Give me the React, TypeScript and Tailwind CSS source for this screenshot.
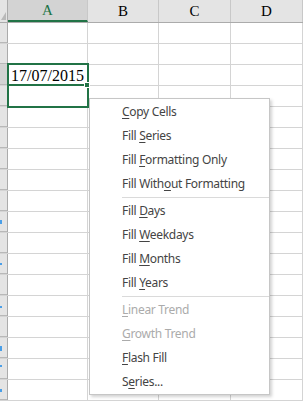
const COLUMNS = [
  { key: 'A', width: 'w-[80px]', active: true },
  { key: 'B', width: 'w-[71px]', active: false },
  { key: 'C', width: 'w-[72px]', active: false },
  { key: 'D', width: 'flex-1', active: false },
];

// clipped row numbers peeking out at the very left edge
const ROW_MARKS: Record<number, string> = {
  9: 'h-[4px] mt-[8px]',
  11: 'h-[2px] mt-[9px]',
  13: 'h-[2px] mt-[10px]',
  15: 'h-[5px] mt-[8px]',
  16: 'h-[2px] mt-[6px]',
  17: 'h-[3px] mt-[9px]',
};

type MenuEntry =
  | { sep: true }
  | { sep?: false; pre: string; key: string; post: string; disabled?: boolean };

const MENU: MenuEntry[] = [
  { pre: '', key: 'C', post: 'opy Cells' },
  { pre: 'Fill ', key: 'S', post: 'eries' },
  { pre: 'Fill ', key: 'F', post: 'ormatting Only' },
  { pre: 'Fill With', key: 'o', post: 'ut Formatting' },
  { sep: true },
  { pre: 'Fill ', key: 'D', post: 'ays' },
  { pre: 'Fill ', key: 'W', post: 'eekdays' },
  { pre: 'Fill ', key: 'M', post: 'onths' },
  { pre: 'Fill ', key: 'Y', post: 'ears' },
  { sep: true },
  { pre: '', key: 'L', post: 'inear Trend', disabled: true },
  { pre: '', key: 'G', post: 'rowth Trend', disabled: true },
  { pre: '', key: 'F', post: 'lash Fill' },
  { pre: 'S', key: 'e', post: 'ries...' },
];

const ROW_COUNT = 18;

const HeaderRow = () => (
  <div className="flex h-[23px] border-b border-[#ababab]">
    <div className="relative w-[8px] shrink-0 border-r border-[#ababab] bg-[#e4e4e4]">
      <svg className="absolute bottom-[2px] right-[1px]" width="5" height="8" viewBox="0 0 5 8">
        <polygon points="5,0 5,8 0,8" fill="#b9b9b9" />
      </svg>
    </div>
    {COLUMNS.map((col) => (
      <div
        key={col.key}
        className={`${col.width} shrink-0 flex items-center justify-center border-r border-[#c8c8c8] pt-[1px] text-[15px] ${
          col.active
            ? 'bg-[#d3d3d3] text-[#217346] border-b-2 border-b-[#217346]'
            : 'bg-[#e4e4e4] text-black'
        }`}
        style={{ fontFamily: '"Liberation Serif", serif' }}
      >
        {col.key}
      </div>
    ))}
  </div>
);

const GridRow = ({ index }: { index: number }) => (
  <div className="flex h-[21px] border-b border-[#d4d4d4]">
    <div
      className={`w-[8px] shrink-0 border-r border-[#ababab] ${
        index === 2 ? 'bg-[#d3d3d3]' : 'bg-[#e4e4e4]'
      } shadow-[inset_0_-1px_0_#b8b8b8]`}
    >
      {ROW_MARKS[index] && <div className={`w-[2px] bg-[#4a9fe8] ${ROW_MARKS[index]}`} />}
    </div>
    {COLUMNS.map((col) => (
      <div
        key={col.key}
        className={`${col.width} shrink-0 flex items-end border-r border-[#d4d4d4] pl-[3px] text-[16px] leading-[18px] text-black`}
        style={{ fontFamily: '"Liberation Serif", serif' }}
      >
        {index === 2 && col.key === 'A' ? '17/07/2015' : null}
      </div>
    ))}
  </div>
);

const FillMenu = () => (
  <div
    className="absolute left-[89px] top-[98px] w-[181px] border border-[#c6c6c6] bg-white pt-[1px] shadow-[2px_2px_3px_rgba(0,0,0,0.18)]"
    style={{ fontFamily: '"Noto Sans", "Open Sans", sans-serif' }}
  >
    {MENU.map((item, i) =>
      item.sep ? (
        <div key={i} className="flex h-[3px] items-center pl-[32px]">
          <div className="h-px w-full bg-[#dadada]" />
        </div>
      ) : (
        <div
          key={i}
          className={`flex h-[24px] items-center pl-[32px] text-[12px] tracking-[-0.3px] ${
            item.disabled ? 'text-[#ababab]' : 'text-[#444444]'
          }`}
        >
          <span>
            {item.pre}
            <u className="underline-offset-[2px]">{item.key}</u>
            {item.post}
          </span>
        </div>
      ),
    )}
  </div>
);

const App = () => {
  return (
    <div className="relative h-[401px] w-[303px] overflow-hidden bg-white">
      <HeaderRow />
      {Array.from({ length: ROW_COUNT }, (_, i) => (
        <GridRow key={i} index={i} />
      ))}

      {/* selection + fill drag range */}
      <div className="pointer-events-none absolute left-[7px] top-[63px] h-[45px] w-[82px] border-2 border-[#217346]" />
      <div className="pointer-events-none absolute left-[7px] top-[84px] h-[2px] w-[80px] bg-[#217346]" />
      <div className="pointer-events-none absolute left-[84px] top-[82px] h-[6px] w-[6px] border border-white bg-[#217346]" />

      <FillMenu />
    </div>
  );
};

export default App;
